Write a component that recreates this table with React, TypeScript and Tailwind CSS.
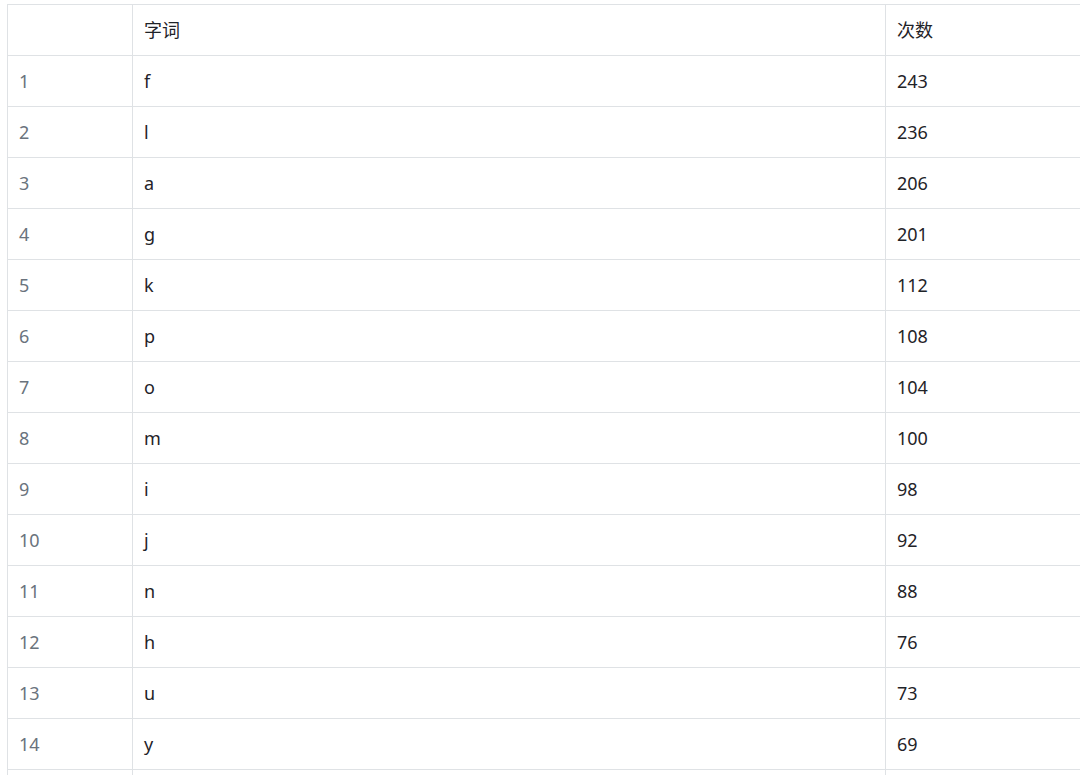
import React from "react";

const rows: [string, string, string][] = [
  ["1", "f", "243"],
  ["2", "l", "236"],
  ["3", "a", "206"],
  ["4", "g", "201"],
  ["5", "k", "112"],
  ["6", "p", "108"],
  ["7", "o", "104"],
  ["8", "m", "100"],
  ["9", "i", "98"],
  ["10", "j", "92"],
  ["11", "n", "88"],
  ["12", "h", "76"],
  ["13", "u", "73"],
  ["14", "y", "69"],
];

export default function App() {
  return (
    <div
      className="w-[1080px] h-[775px] overflow-hidden bg-white pt-[4px] pl-[7px]"
      style={{ fontFamily: '"Noto Sans", "Noto Sans CJK SC", sans-serif' }}
    >
      <table className="border-collapse w-[1200px] text-[18px] text-[#1f2328] table-fixed">
        <colgroup>
          <col className="w-[125px]" />
          <col className="w-[753px]" />
          <col className="w-[322px]" />
        </colgroup>
        <thead>
          <tr className="h-[51px]">
            <th className="border border-[#dfe2e5] px-[12px] text-left font-normal"></th>
            <th className="border border-[#dfe2e5] px-[11px] text-left font-normal">字词</th>
            <th className="border border-[#dfe2e5] px-[11px] text-left font-normal">次数</th>
          </tr>
        </thead>
        <tbody>
          {rows.map((r) => (
            <tr key={r[0]} className="h-[51px]">
              <td className="border border-[#dfe2e5] px-[11px] text-[#6a737d]">{r[0]}</td>
              <td className="border border-[#dfe2e5] px-[11px]">{r[1]}</td>
              <td className="border border-[#dfe2e5] px-[11px]">{r[2]}</td>
            </tr>
          ))}
          <tr className="h-[51px]">
            <td className="border border-[#dfe2e5]"></td>
            <td className="border border-[#dfe2e5]"></td>
            <td className="border border-[#dfe2e5]"></td>
          </tr>
        </tbody>
      </table>
    </div>
  );
}
